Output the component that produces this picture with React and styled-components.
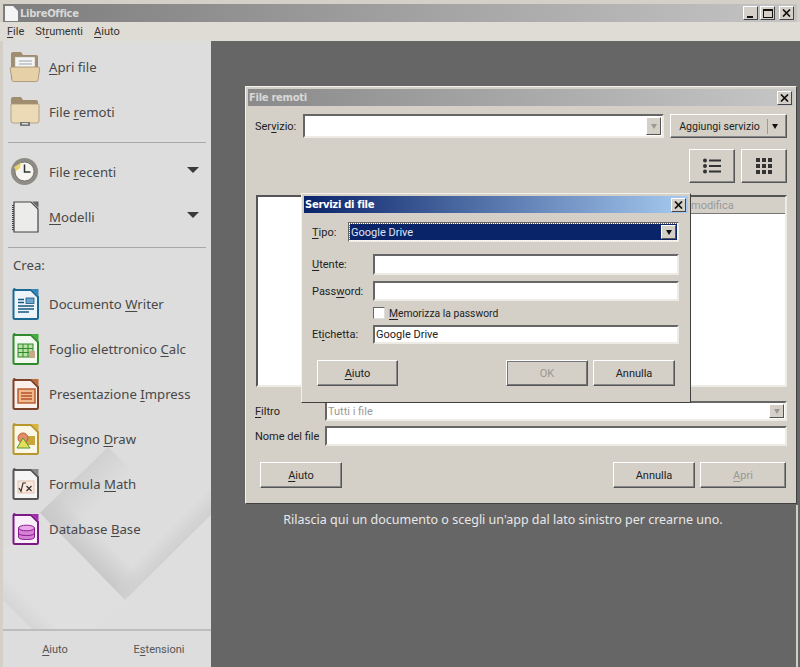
import React from "react";
import styled, { createGlobalStyle } from "styled-components";

const GlobalStyle = createGlobalStyle`
  html, body { margin: 0; padding: 0; background: #666; }
  * { box-sizing: border-box; }
`;

const face = `#d4d0c8`;

const Page = styled.div`
  position: relative;
  width: 800px;
  height: 667px;
  overflow: hidden;
  display: flex;
  flex-direction: column;
  padding-top: 4px;
  background: ${face};
  font-family: Roboto, "Noto Sans", sans-serif;
  font-size: 11px;
  color: #222;
`;

const Acc = styled.span`
  text-decoration: underline;
  text-underline-offset: 2px;
  text-decoration-thickness: 1px;
`;

const TitleBar = styled.div`
  height: 18px;
  margin: 0 3px;
  display: flex;
  align-items: center;
  gap: 2px;
  padding: 0 3px 0 1px;
  background: linear-gradient(to right, ${(p) => p.$from}, ${(p) => p.$to});
  color: ${(p) => p.$color || "#d8d8d8"};
  font-family: "DejaVu Sans", sans-serif;
  font-size: 10px;
  letter-spacing: -0.3px;
  font-weight: bold;
`;

const TitleText = styled.span`
  flex: 1;
`;

const CapButton = styled.div`
  width: 15px;
  height: 14px;
  display: flex;
  align-items: center;
  justify-content: center;
  background: ${face};
  border: 1px solid;
  border-color: #fff #444 #444 #fff;
  margin-left: ${(p) => p.$gap || 0}px;
  svg { display: block; }
`;

const MenuBar = styled.div`
  height: 19px;
  display: flex;
  align-items: center;
  gap: 11px;
  padding-left: 7px;
  background: #dfdcd5;
  font-size: 11px;
  color: #333;
`;

const Body = styled.div`
  flex: 1;
  display: flex;
  padding-left: 3px;
`;

const Sidebar = styled.nav`
  position: relative;
  width: 208px;
  display: flex;
  flex-direction: column;
  background: #dddddd;
  padding-top: 3px;
  color: #484848;
  font-family: "Noto Sans", sans-serif;
  font-size: 13.2px;
`;

const SideArt = styled.svg`
  position: absolute;
  left: 0;
  top: 0;
  pointer-events: none;
`;

const SideRow = styled.div`
  position: relative;
  height: 45px;
  display: flex;
  align-items: center;
  padding-left: 6px;
  gap: 8px;
`;

const IconBox = styled.div`
  width: 32px;
  height: 32px;
  flex: none;
  svg { display: block; }
`;

const RowLabel = styled.span`
  flex: 1;
`;

const DropArrow = styled.span`
  width: 0;
  height: 0;
  margin: 0 12px 4px 0;
  border-left: 6px solid transparent;
  border-right: 6px solid transparent;
  border-top: 6px solid #3a3a3a;
`;

const Rule = styled.div`
  position: relative;
  height: 1px;
  background: #a8a8a8;
  margin: ${(p) => p.$margin};
`;

const CreateTitle = styled.div`
  position: relative;
  padding-left: 10px;
  height: 20px;
  line-height: 20px;
  margin-bottom: 6px;
`;

const SideFooter = styled.div`
  position: relative;
  margin-top: auto;
  height: 38px;
  border-top: 2px solid #bdbdbd;
  display: grid;
  grid-template-columns: 104px 104px;
  align-items: center;
  justify-items: center;
  font-family: Roboto, sans-serif;
  font-size: 11px;
  color: #555;
`;

const Main = styled.main`
  flex: 1;
  background: #666666;
  padding-top: 470px;
  padding-right: 5px;
  text-align: center;
  color: #e8e8e8;
  font-family: "Noto Sans", sans-serif;
  font-size: 12.5px;
  line-height: 18px;
`;

const EdgeStrip = styled.div`
  position: absolute;
  left: 796px;
  top: 505px;
  bottom: 0;
  width: 2px;
  background: #cfcdc6;
`;

const Window = styled.section`
  position: absolute;
  left: ${(p) => p.$x}px;
  top: ${(p) => p.$y}px;
  width: ${(p) => p.$w}px;
  height: ${(p) => p.$h}px;
  padding-top: 2px;
  background: ${face};
  border: 1px solid;
  border-color: #f2f0ea #404040 #404040 #f2f0ea;
  display: flex;
  flex-direction: column;
  ${TitleBar} { margin: 0 2px; height: 17px; padding-left: 1px; padding-right: 2px; }
`;

const WinBody = styled.div`
  position: relative;
  flex: 1;
  display: flex;
  flex-direction: column;
  padding: ${(p) => p.$padding};
`;

const FieldRow = styled.div`
  display: grid;
  grid-template-columns: ${(p) => p.$cols};
  align-items: center;
  height: ${(p) => p.$h || 20}px;
  margin-top: ${(p) => p.$mt || 0}px;
`;

const Field = styled.div`
  height: 100%;
  min-width: 0;
  display: flex;
  align-items: center;
  justify-content: space-between;
  padding: 1px 1px 1px 1px;
  background: ${(p) => (p.$selected ? "#0a246a" : "#fff")};
  color: ${(p) => (p.$selected ? "#dfe6f5" : p.$muted ? "#999" : "#222")};
  border: 2px solid;
  border-color: #666 #eeebe4 #eeebe4 #666;
  outline: ${(p) => (p.$selected ? "1px dotted #fff" : "none")};
  outline-offset: -2px;
`;

const ComboArrow = styled.span`
  width: 15px;
  height: 100%;
  flex: none;
  display: flex;
  align-items: center;
  justify-content: center;
  background: ${face};
  border: 1px solid;
  border-color: #fff #555 #555 #fff;
  &::after {
    content: "";
    border-left: 3px solid transparent;
    border-right: 3px solid transparent;
    border-top: 5px solid ${(p) => (p.$off ? "#999" : "#111")};
  }
`;

const Raised = styled.div`
  display: flex;
  align-items: center;
  justify-content: center;
  width: ${(p) => p.$w}px;
  height: ${(p) => p.$h || 26}px;
  background: ${face};
  border: 1px solid;
  border-color: #fff #555 #555 #fff;
  box-shadow: ${(p) => (p.$focus ? "inset 0 0 0 1px #777" : "inset -1px -1px 0 #888")};
  color: ${(p) => (p.$off ? "#9a978f" : "#222")};
`;

const ServiceRow = styled.div`
  display: flex;
  align-items: center;
  height: 24px;
`;

const ServiceLabel = styled.span`
  width: 48px;
`;

const ServiceField = styled(Field)`
  width: 361px;
  margin-right: 6px;
`;

const AddService = styled(Raised)`
  font-size: 10.6px;
`;

const SplitMark = styled.span`
  width: 1px;
  height: 15px;
  margin: 0 4px 0 7px;
  background: #999;
`;

const SmallCaret = styled.span`
  border-left: 3px solid transparent;
  border-right: 3px solid transparent;
  border-top: 5px solid #111;
`;

const ViewRow = styled.div`
  display: flex;
  justify-content: flex-end;
  gap: 6px;
  margin-top: 11px;
`;

const FileList = styled.div`
  margin: 12px 0 0 1px;
  height: 192px;
  display: grid;
  grid-template-columns: 160px 1fr;
  background: #fff;
  border: 2px solid;
  border-color: #555 #eeebe4 #eeebe4 #555;
`;

const ListPane = styled.div`
  background: #fff;
`;

const ListHeader = styled.div`
  height: 17px;
  padding-left: 273px;
  display: flex;
  align-items: center;
  background: ${face};
  border-bottom: 1px solid #777;
  color: #999;
`;

const ButtonRow = styled.div`
  display: flex;
  align-items: center;
  gap: 5px;
  margin-top: ${(p) => p.$mt}px;
  padding: ${(p) => p.$padding || 0};
`;

const Push = styled.div`
  flex: 1;
`;

const CheckRow = styled.div`
  display: flex;
  align-items: center;
  height: 12px;
  margin: 6px 0 6px 61px;
  gap: 4px;
  font-size: 10.3px;
`;

const Box = styled.span`
  width: 12px;
  height: 12px;
  background: #fff;
  border: 1px solid;
  border-color: #666 #ddd #ddd #666;
`;

const CloseGlyph = () => (
  <svg width="9" height="8" viewBox="0 0 9 8">
    <path d="M1 0.5 L8 7.5 M8 0.5 L1 7.5" stroke="#111" strokeWidth="1.7" />
  </svg>
);

const Art = () => (
  <SideArt width="208" height="588" viewBox="3 41 208 588">
    <defs>
      <linearGradient id="foldA" gradientUnits="userSpaceOnUse" x1="74" y1="480" x2="98" y2="504">
        <stop offset="0" stopColor="#d0d0d0" />
        <stop offset="1" stopColor="#d0d0d0" stopOpacity="0" />
      </linearGradient>
      <linearGradient id="foldB" gradientUnits="userSpaceOnUse" x1="82" y1="556" x2="102" y2="536">
        <stop offset="0" stopColor="#c8c8c8" />
        <stop offset="1" stopColor="#c8c8c8" stopOpacity="0" />
      </linearGradient>
      <linearGradient id="foldC" gradientUnits="userSpaceOnUse" x1="168" y1="557" x2="154" y2="543">
        <stop offset="0" stopColor="#d0d0d0" />
        <stop offset="1" stopColor="#d0d0d0" stopOpacity="0" />
      </linearGradient>
      <linearGradient id="foldD" gradientUnits="userSpaceOnUse" x1="12" y1="618" x2="30" y2="600">
        <stop offset="0" stopColor="#d2d2d2" />
        <stop offset="1" stopColor="#d2d2d2" stopOpacity="0" />
      </linearGradient>
    </defs>
    <polygon points="108,447 40,513 70,543 138,477" fill="url(#foldA)" />
    <polygon points="40,513 125,600 150,575 65,488" fill="url(#foldB)" />
    <polygon points="125,600 211,515 211,480 107,582" fill="url(#foldC)" />
    <polygon points="40,513 3,550 3,600 32,629 97,629 125,600" fill="#dfdfdf" />
    <polygon points="3,600 32,629 62,629 3,570" fill="url(#foldD)" />
    <polygon points="125,600 97,629 211,629 211,515" fill="#dedede" />
  </SideArt>
);

const FolderOpen = () => (
  <svg width="32" height="32" viewBox="0 0 32 32">
    <path d="M2 28 V3 q0-2 2-2 h8 l2 3 h13 q2 0 2 2 v22 z" fill="#a08d6f" />
    <rect x="6" y="6" width="20" height="14" fill="#f4f4f2" stroke="#aaa" strokeWidth="0.5" />
    <path d="M10 10 H23 M10 13 H23" stroke="#9aa6b5" strokeWidth="1" />
    <path d="M3 16 H29 q2 0 1.7 2 L29 29 q0 1.500-1.500 1.500 H4.500 Q3 30.500 3 29 L1.200 18 q-.2-2 1.800-2z" fill="#e6d0a8" stroke="#a08d6f" strokeWidth="0.8" />
  </svg>
);

const FolderRemote = () => (
  <svg width="32" height="32" viewBox="0 0 32 32">
    <path d="M2 26 V3 q0-2 2-2 h8 l2 3 h13 q2 0 2 2 v20 z" fill="#a08d6f" />
    <path d="M2 8 H29 q1 0 1 1 V25 q0 2-2 2 H4 q-2 0-2-2 Z" fill="#ecd9b6" stroke="#a89674" strokeWidth="0.8" />
    <rect x="11" y="26" width="10" height="4" fill="#777" />
    <rect x="13" y="27" width="6" height="1.400" fill="#ddd" />
  </svg>
);

const ClockIcon = () => (
  <svg width="32" height="32" viewBox="0 0 32 32">
    <circle cx="15.500" cy="15.500" r="13.500" fill="#8e8c84" />
    <circle cx="15.500" cy="15.500" r="9.500" fill="#f6f5ef" stroke="#666" strokeWidth="0.8" />
    <path d="M15.500 8.500 V16 H21.500" fill="none" stroke="#333" strokeWidth="1.500" />
    <path d="M5 11 L10 8 L12 6 L11 12 L7 15 Z" fill="#e9d36a" />
  </svg>
);

const TemplateIcon = () => (
  <svg width="32" height="32" viewBox="0 0 32 32">
    <path d="M5 1 H22 L29 8 V31 H5 Z" fill="#ececea" stroke="#444" strokeWidth="1.200" />
    <path d="M23 0.500 L29.500 7 V0.500 Z" fill="#666" />
    <path d="M4 4 V29" stroke="#444" strokeWidth="2" strokeDasharray="1 1" />
  </svg>
);

const DocIcon = ({ color, corner, light, children }) => (
  <svg width="32" height="32" viewBox="0 0 32 32">
    <path d="M5 2 H22 L29 9 V29.500 q0 1.500-1.500 1.500 H6 q-1.500 0-1.500-1.500 V2.500 q0-1.500 1-1.500 Z" fill={light} stroke={color} strokeWidth="2" strokeLinejoin="round" />
    <path d="M22.500 1 L29.500 8 V1 Z" fill={corner} />
    {children}
  </svg>
);

const WriterGlyph = () => (
  <g stroke="#17587f" strokeWidth="1.400">
    <path d="M9 11.500 H15 M9 14.500 H15 M9 18 H25 M9 21 H25 M9 24 H20" />
    <rect x="17" y="10" width="8" height="5.500" fill="#6aa5cf" stroke="#17587f" strokeWidth="0.8" />
  </g>
);

const CalcGlyph = () => (
  <g>
    <rect x="9" y="11" width="15" height="13" fill="#b9e2a4" stroke="#2f8a2b" strokeWidth="1" />
    <path d="M9 15.500 H24 M9 19.500 H24 M14 11 V24 M19 11 V24" stroke="#2f8a2b" strokeWidth="1" />
    <rect x="20" y="18" width="6" height="7" fill="#c9a98c" />
  </g>
);

const ImpressGlyph = () => (
  <g>
    <rect x="9" y="11" width="17" height="14" fill="#f2b98c" stroke="#b3562a" strokeWidth="1.400" />
    <path d="M12 15 H23 M12 18 H23 M12 21 H23" stroke="#b3562a" strokeWidth="1.400" />
  </g>
);

const DrawGlyph = () => (
  <g>
    <rect x="16" y="13" width="10" height="9" fill="#c9a63c" />
    <circle cx="14" cy="15" r="5" fill="#e08d6a" stroke="#b8623c" strokeWidth="1" />
    <path d="M14 15 L21 25 H8 Z" fill="#e8dd58" stroke="#4d9a3a" strokeWidth="1" />
  </g>
);

const MathGlyph = () => (
  <g>
    <rect x="9" y="13" width="16" height="12" fill="#fbe9dd" stroke="#e0b7a0" strokeWidth="0.8" />
    <path d="M10 20 L12 23.500 L14 15 H17 M17.500 18 L22.500 23 M22.500 18 L17.500 23" fill="none" stroke="#333" strokeWidth="1.200" />
  </g>
);

const BaseGlyph = () => (
  <g fill="#d780d8" stroke="#8a1f8c" strokeWidth="1">
    <path d="M9.500 15 V24 q0 2.500 8 2.500 t8 -2.500 V15 Z" />
    <ellipse cx="17.500" cy="15" rx="8" ry="2.800" fill="#eaa8ea" />
    <path d="M9.500 20 q0 2.500 8 2.500 t8 -2.500" fill="none" />
  </g>
);

const apps = [
  { key: "w", before: "Documento ", acc: "W", after: "riter", color: "#1b6a96", corner: "#2f86bd", light: "#eef5fa", Glyph: WriterGlyph },
  { key: "c", before: "Foglio elettronico ", acc: "C", after: "alc", color: "#2f8a2b", corner: "#3fae3a", light: "#f2f9ee", Glyph: CalcGlyph },
  { key: "i", before: "Presentazione ", acc: "I", after: "mpress", color: "#7d4028", corner: "#c0683a", light: "#fbf1ea", Glyph: ImpressGlyph },
  { key: "d", before: "Disegno ", acc: "D", after: "raw", color: "#b8962c", corner: "#d9b63a", light: "#fbf7e6", Glyph: DrawGlyph },
  { key: "m", before: "Formula ", acc: "M", after: "ath", color: "#555555", corner: "#888888", light: "#f5f5f5", Glyph: MathGlyph },
  { key: "b", before: "Database ", acc: "B", after: "ase", color: "#7b1a85", corner: "#a52cb0", light: "#faeefa", Glyph: BaseGlyph },
];

const ListIcon = () => (
  <svg width="18" height="16" viewBox="0 0 18 16">
    <g fill="#333">
      <circle cx="2" cy="2.500" r="2" /><circle cx="2" cy="8" r="2" /><circle cx="2" cy="13.500" r="2" />
      <rect x="6" y="1.500" width="12" height="2" /><rect x="6" y="7" width="12" height="2" /><rect x="6" y="12.500" width="12" height="2" />
    </g>
  </svg>
);

const GridIcon = () => (
  <svg width="16" height="16" viewBox="0 0 16 16">
    <g fill="#333">
      {[0, 6, 12].map((y) =>
        [0, 6, 12].map((x) => <rect key={`${x}-${y}`} x={x} y={y} width="4" height="4" />)
      )}
    </g>
  </svg>
);

export default function App() {
  return (
    <>
      <GlobalStyle />
      <Page>
        <TitleBar $from="#7d7d7d" $to="#c4c4c4">
          <svg width="14" height="15" viewBox="0 0 14 15">
            <path d="M1 0 H9 L14 5 V15 H1 Z" fill="#f4f4f4" />
          </svg>
          <TitleText>LibreOffice</TitleText>
          <CapButton>
            <svg width="9" height="9" viewBox="0 0 9 9"><rect x="1" y="7" width="6" height="2" fill="#111" /></svg>
          </CapButton>
          <CapButton>
            <svg width="10" height="9" viewBox="0 0 10 9"><rect x="0.5" y="0.5" width="9" height="8" fill="none" stroke="#111" /><rect x="0" y="0" width="10" height="2" fill="#111" /></svg>
          </CapButton>
          <CapButton $gap={2}><CloseGlyph /></CapButton>
        </TitleBar>
        <MenuBar>
          <span><Acc>F</Acc>ile</span>
          <span>St<Acc>r</Acc>umenti</span>
          <span><Acc>A</Acc>iuto</span>
        </MenuBar>
        <Body>
          <Sidebar>
            <Art />
            <SideRow>
              <IconBox><FolderOpen /></IconBox>
              <RowLabel><Acc>A</Acc>pri file</RowLabel>
            </SideRow>
            <SideRow>
              <IconBox><FolderRemote /></IconBox>
              <RowLabel>File <Acc>r</Acc>emoti</RowLabel>
            </SideRow>
            <Rule $margin="8px 5px 6px 5px" />
            <SideRow>
              <IconBox><ClockIcon /></IconBox>
              <RowLabel>File <Acc>r</Acc>ecenti</RowLabel>
              <DropArrow />
            </SideRow>
            <SideRow>
              <IconBox><TemplateIcon /></IconBox>
              <RowLabel><Acc>M</Acc>odelli</RowLabel>
              <DropArrow />
            </SideRow>
            <Rule $margin="8px 5px 7px 5px" />
            <CreateTitle>Crea:</CreateTitle>
            {apps.map(({ key, before, acc, after, color, corner, light, Glyph }) => (
              <SideRow key={key}>
                <IconBox>
                  <DocIcon color={color} corner={corner} light={light}><Glyph /></DocIcon>
                </IconBox>
                <RowLabel>{before}<Acc>{acc}</Acc>{after}</RowLabel>
              </SideRow>
            ))}
            <SideFooter>
              <span><Acc>A</Acc>iuto</span>
              <span>E<Acc>s</Acc>tensioni</span>
            </SideFooter>
          </Sidebar>
          <Main>Rilascia qui un documento o scegli un'app dal lato sinistro per crearne uno.</Main>
        </Body>
        <EdgeStrip />

        <Window $x={245} $y={86} $w={552} $h={418}>
          <TitleBar $from="#8a8a8a" $to="#c6c6c6">
            <TitleText>File remoti</TitleText>
            <CapButton><CloseGlyph /></CapButton>
          </TitleBar>
          <WinBody $padding="8px 9px 0 9px">
            <ServiceRow>
              <ServiceLabel>Ser<Acc>v</Acc>izio:</ServiceLabel>
              <ServiceField><span /><ComboArrow $off /></ServiceField>
              <AddService $w={117} $h={24}>
                Aggiungi servizio<SplitMark /><SmallCaret />
              </AddService>
            </ServiceRow>
            <ViewRow>
              <Raised $w={46} $h={34}><ListIcon /></Raised>
              <Raised $w={46} $h={34}><GridIcon /></Raised>
            </ViewRow>
            <FileList>
              <ListPane />
              <div>
                <ListHeader>modifica</ListHeader>
              </div>
            </FileList>
            <FieldRow $cols="70px 1fr" $mt={14}>
              <span><Acc>F</Acc>iltro</span>
              <Field $muted>Tutti i file<ComboArrow $off /></Field>
            </FieldRow>
            <FieldRow $cols="70px 1fr" $mt={5}>
              <span>Nome del file</span>
              <Field />
            </FieldRow>
            <ButtonRow $mt={16} $padding="0 1px 0 5px">
              <Raised $w={82}><span><Acc>A</Acc>iuto</span></Raised>
              <Push />
              <Raised $w={82}>Annulla</Raised>
              <Raised $w={86} $off><span><Acc>A</Acc>pri</span></Raised>
            </ButtonRow>
          </WinBody>
        </Window>

        <Window $x={301} $y={193} $w={390} $h={210}>
          <TitleBar $from="#0a246a" $to="#a6caf0" $color="#fff">
            <TitleText>Servizi di file</TitleText>
            <CapButton><CloseGlyph /></CapButton>
          </TitleBar>
          <WinBody $padding="9px 11px 0 10px">
            <FieldRow $cols="36px 1fr">
              <span><Acc>T</Acc>ipo:</span>
              <Field $selected>Google Drive<ComboArrow /></Field>
            </FieldRow>
            <FieldRow $cols="61px 1fr" $mt={12} $h={21}>
              <span><Acc>U</Acc>tente:</span>
              <Field />
            </FieldRow>
            <FieldRow $cols="61px 1fr" $mt={6} $h={20}>
              <span>Pass<Acc>w</Acc>ord:</span>
              <Field />
            </FieldRow>
            <CheckRow>
              <Box />
              <span><Acc>M</Acc>emorizza la password</span>
            </CheckRow>
            <FieldRow $cols="61px 1fr" $h={19}>
              <span>Et<Acc>i</Acc>chetta:</span>
              <Field>Google Drive</Field>
            </FieldRow>
            <ButtonRow $mt={16} $padding="0 4px 0 5px">
              <Raised $w={81}><span><Acc>A</Acc>iuto</span></Raised>
              <Push />
              <Raised $w={82} $off $focus>OK</Raised>
              <Raised $w={82}>Annulla</Raised>
            </ButtonRow>
          </WinBody>
        </Window>
      </Page>
    </>
  );
}
